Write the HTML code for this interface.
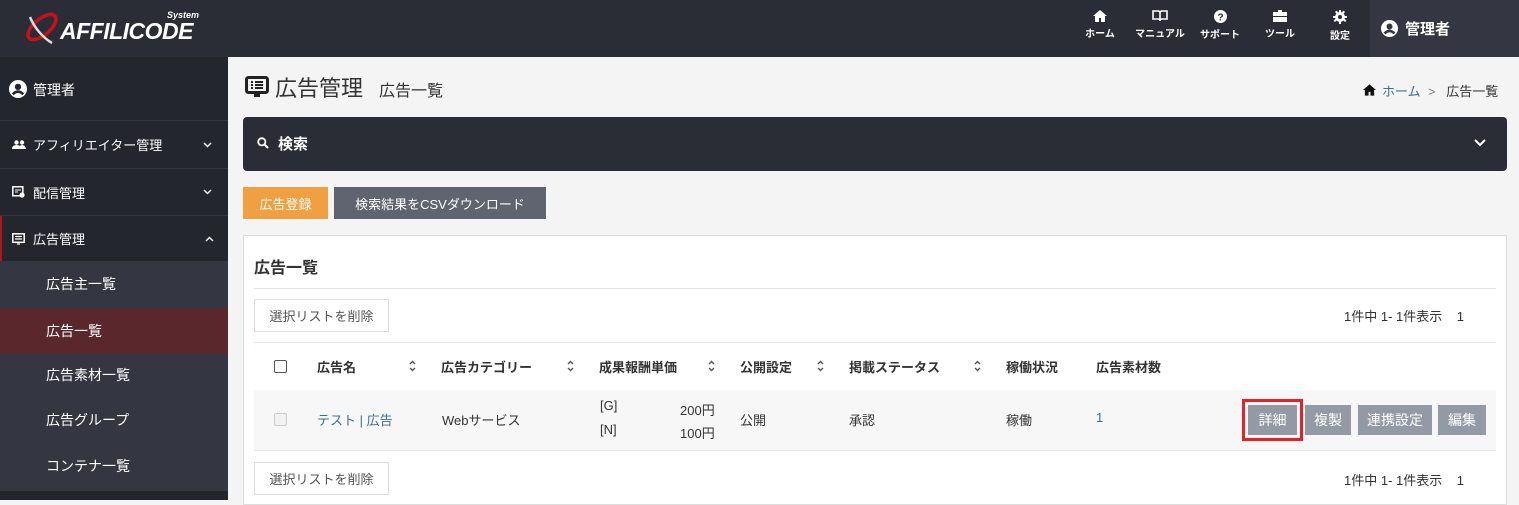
<!DOCTYPE html>
<html><head><meta charset="utf-8"><style>
*{box-sizing:border-box;margin:0;padding:0}
body{width:1519px;height:500px;overflow:hidden;background:#f4f4f4;font-family:"Liberation Sans","Noto Sans CJK JP",sans-serif;font-size:14px;color:#333;position:relative}
.abs{position:absolute}
.hdr{left:0;top:0;width:1519px;height:57px;background:#2a2d36}
.nav{top:10px;width:60px;text-align:center;color:#fff;font-size:10px;font-weight:bold}
.nav svg{display:block;margin:0 auto 3px}
.side{left:0;top:57px;width:228px;height:443px;background:#23262d}
.si{left:0;width:228px;color:#fff;font-size:13px;display:flex;align-items:center}
.sub{left:0;width:228px;height:46px;color:#fff;font-size:14px;padding-left:46px;line-height:46px}
.btn{color:#fff;font-size:13px;display:flex;align-items:center;justify-content:center}
.th{top:357px;font-weight:bold;font-size:13px;color:#333}
.sort{top:360px}
.td{font-size:13px;color:#333}
.ab{top:405px;height:30px;background:#939aa6;color:#fff;font-size:14px;display:flex;align-items:center;justify-content:center}
.chev{position:absolute;left:203px}
</style></head><body>
<div class="abs hdr"></div>
<svg class="abs" style="left:22px;top:9px" width="40" height="36" viewBox="0 0 40 36"><ellipse cx="20" cy="18" rx="17" ry="8" transform="rotate(-40 20 18)" fill="none" stroke="#c8101a" stroke-width="3.5"/><path d="M8 8 C12 18 20 28 30 34" stroke="#ddd" stroke-width="2.5" fill="none"/></svg>
<div class="abs" style="left:60px;top:18px;color:#fff;font-size:23px;font-weight:bold;font-style:italic;letter-spacing:-0.5px">AFFILICODE</div>
<div class="abs" style="left:167px;top:10px;color:#fff;font-size:9px;font-weight:bold;font-style:italic">System</div>
<div class="abs nav" style="left:1070px"><svg width="14" height="12" viewBox="0 0 14 12"><path d="M7 0L0 6h2v6h4V8h2v4h4V6h2z" fill="#fff"/></svg>ホーム</div>
<div class="abs nav" style="left:1130px"><svg width="16" height="12" viewBox="0 0 16 12"><path d="M1 1h5q2 0 2 2v8q0-2-2-2H1zM15 1h-5q-2 0-2 2v8q0-2 2-2h5z" stroke="#fff" stroke-width="1.6" fill="none"/></svg>マニュアル</div>
<div class="abs nav" style="left:1190px"><svg width="13" height="13" viewBox="0 0 13 13"><circle cx="6.5" cy="6.5" r="6.5" fill="#fff"/><text x="6.5" y="10.5" font-size="10" font-weight="bold" text-anchor="middle" fill="#2a2d36" font-family="Liberation Sans">?</text></svg>サポート</div>
<div class="abs nav" style="left:1250px"><svg width="14" height="12" viewBox="0 0 14 12"><path d="M5 0h4v2h5v4H0V2h5zM0 7h14v5H0z" fill="#fff"/></svg>ツール</div>
<div class="abs nav" style="left:1310px"><svg width="14" height="14" viewBox="0 0 14 14"><circle cx="7" cy="7" r="5" fill="#fff"/><path d="M6 0h2v14H6zM0 6h14v2H0zM2 2l1.4-1.4 10 10L12 12zM12 2l-1.4-1.4-10 10L2 12z" fill="#fff"/><circle cx="7" cy="7" r="2" fill="#2a2d36"/></svg>設定</div>
<div class="abs" style="left:1370px;top:0;width:149px;height:57px;background:#343741"></div>
<svg class="abs" style="left:1381px;top:20px" width="17" height="17" viewBox="0 0 17 17"><circle cx="8.5" cy="8.5" r="8.5" fill="#fff"/><circle cx="8.5" cy="6.5" r="3" fill="#343741"/><path d="M3.5 13.5q5-5 10 0" stroke="#343741" stroke-width="2.5" fill="none"/></svg>
<div class="abs" style="left:1405px;top:18px;color:#fff;font-size:15px;font-weight:bold">管理者</div>

<div class="abs side"></div>
<svg class="abs" style="left:9px;top:80px" width="18" height="18" viewBox="0 0 17 17"><circle cx="8.5" cy="8.5" r="8.5" fill="#fff"/><circle cx="8.5" cy="6.5" r="3" fill="#23262d"/><path d="M3.5 13.5q5-5 10 0" stroke="#23262d" stroke-width="2.5" fill="none"/></svg>
<div class="abs" style="left:33px;top:80px;color:#fff;font-size:14px">管理者</div>
<div class="abs" style="left:0;top:120px;width:228px;height:1px;background:#33363e"></div>
<div class="abs si" style="top:121px;height:47px;padding-left:12px"><svg width="14" height="9" style="margin-right:7px" viewBox="0 0 14 9"><circle cx="4.5" cy="2.5" r="2.2" fill="#fff"/><circle cx="10" cy="2.5" r="2.2" fill="#fff"/><path d="M0 9q0-4 4.5-4t4.5 4zM7 9q0-4 3-4t4 4z" fill="#fff"/></svg>アフィリエイター管理<svg class="chev" width="9" height="6" viewBox="0 0 9 6"><path d="M1 1l3.5 3.5L8 1" stroke="#fff" stroke-width="1.5" fill="none"/></svg></div>
<div class="abs" style="left:0;top:168px;width:228px;height:1px;background:#33363e"></div>
<div class="abs si" style="top:169px;height:46px;padding-left:12px"><svg width="13" height="12" style="margin-right:8px" viewBox="0 0 13 12"><rect x="0.8" y="0.8" width="10" height="9" fill="none" stroke="#fff" stroke-width="1.5"/><path d="M3 4h6M3 6h3" stroke="#fff"/><circle cx="10" cy="9" r="2.6" fill="#fff"/></svg>配信管理<svg class="chev" width="9" height="6" viewBox="0 0 9 6"><path d="M1 1l3.5 3.5L8 1" stroke="#fff" stroke-width="1.5" fill="none"/></svg></div>
<div class="abs" style="left:0;top:215px;width:228px;height:1px;background:#33363e"></div>
<div class="abs si" style="top:216px;height:45px;padding-left:10px;border-left:2px solid #b0141e"><svg width="13" height="12" style="margin-right:8px" viewBox="0 0 13 12"><rect x="0.8" y="0.8" width="11.4" height="8.5" fill="none" stroke="#fff" stroke-width="1.5"/><path d="M3 3.5h7M3 6h7M5 11h3" stroke="#fff" stroke-width="1.3"/></svg>広告管理<svg class="chev" width="9" height="6" viewBox="0 0 9 6"><path d="M1 5l3.5-3.5L8 5" stroke="#fff" stroke-width="1.5" fill="none"/></svg></div>
<div class="abs" style="left:0;top:261px;width:228px;height:230px;background:#343741"></div>
<div class="abs sub" style="top:261px">広告主一覧</div>
<div class="abs sub" style="top:308px;background:#5a272d">広告一覧</div>
<div class="abs sub" style="top:352px">広告素材一覧</div>
<div class="abs sub" style="top:397px">広告グループ</div>
<div class="abs sub" style="top:443px">コンテナ一覧</div>

<svg class="abs" style="left:245px;top:76px" width="24" height="21" viewBox="0 0 24 21"><rect x="1.5" y="1.5" width="21" height="15" rx="2" fill="none" stroke="#222" stroke-width="3"/><path d="M6 6h2M10 6h8M6 9h2M10 9h8M6 12h2M10 12h8" stroke="#222" stroke-width="2"/><path d="M9 18h6v3H9z" fill="#222"/></svg>
<div class="abs" style="left:275px;top:71px;font-size:22px;color:#333">広告管理</div>
<div class="abs" style="left:379px;top:77px;font-size:16px;color:#333">広告一覧</div>
<svg class="abs" style="left:1363px;top:84px" width="13" height="12" viewBox="0 0 14 12"><path d="M7 0L0 6h2v6h4V8h2v4h4V6h2z" fill="#111"/></svg>
<div class="abs" style="left:1382px;top:81px;font-size:13px;color:#3a6f9e">ホーム <span style="color:#888">&nbsp;&gt;&nbsp;</span> <span style="color:#333">&nbsp;広告一覧</span></div>

<div class="abs" style="left:243px;top:117px;width:1264px;height:54px;background:#2a2d36;border-radius:4px"></div>
<svg class="abs" style="left:257px;top:137px" width="12" height="12" viewBox="0 0 12 12"><circle cx="4.8" cy="4.8" r="3.6" fill="none" stroke="#fff" stroke-width="1.8"/><path d="M7.5 7.5L11 11" stroke="#fff" stroke-width="2"/></svg>
<div class="abs" style="left:278px;top:133px;color:#fff;font-size:15px;font-weight:bold">検索</div>
<svg class="abs" style="left:1474px;top:139px" width="12" height="8" viewBox="0 0 12 8"><path d="M1 1l5 5 5-5" stroke="#fff" stroke-width="2" fill="none"/></svg>

<div class="abs btn" style="left:243px;top:187px;width:85px;height:32px;background:#f0a040">広告登録</div>
<div class="abs btn" style="left:334px;top:187px;width:212px;height:32px;background:#5f6470">検索結果をCSVダウンロード</div>

<div class="abs" style="left:243px;top:235px;width:1264px;height:270px;background:#fff;border:1px solid #ddd"></div>
<div class="abs" style="left:254px;top:254px;font-size:16px;font-weight:bold;color:#333">広告一覧</div>
<div class="abs" style="left:254px;top:288px;width:1242px;height:1px;background:#e6e6e6"></div>
<div class="abs" style="left:254px;top:299px;width:135px;height:33px;border:1px solid #ddd;font-size:13px;color:#555;display:flex;align-items:center;justify-content:center">選択リストを削除</div>
<div class="abs" style="left:1344px;top:306px;font-size:13px;color:#333">1件中 1- 1件表示 &nbsp;&nbsp;&nbsp;1</div>
<div class="abs" style="left:254px;top:342px;width:1242px;height:1px;background:#e6e6e6"></div>
<div class="abs" style="left:274px;top:360px;width:13px;height:13px;border:1px solid #555;border-radius:2px;background:#fff"></div>
<div class="abs th" style="left:317px">広告名</div>
<div class="abs th" style="left:441px">広告カテゴリー</div>
<div class="abs th" style="left:599px">成果報酬単価</div>
<div class="abs th" style="left:740px">公開設定</div>
<div class="abs th" style="left:849px">掲載ステータス</div>
<div class="abs th" style="left:1006px">稼働状況</div>
<div class="abs th" style="left:1096px">広告素材数</div>
<svg class="abs sort" style="left:409px" width="7" height="12" viewBox="0 0 7 12"><path d="M1 4l2.5-2.5L6 4M1 8l2.5 2.5L6 8" stroke="#555" stroke-width="1.4" fill="none"/></svg>
<svg class="abs sort" style="left:567px" width="7" height="12" viewBox="0 0 7 12"><path d="M1 4l2.5-2.5L6 4M1 8l2.5 2.5L6 8" stroke="#555" stroke-width="1.4" fill="none"/></svg>
<svg class="abs sort" style="left:708px" width="7" height="12" viewBox="0 0 7 12"><path d="M1 4l2.5-2.5L6 4M1 8l2.5 2.5L6 8" stroke="#555" stroke-width="1.4" fill="none"/></svg>
<svg class="abs sort" style="left:817px" width="7" height="12" viewBox="0 0 7 12"><path d="M1 4l2.5-2.5L6 4M1 8l2.5 2.5L6 8" stroke="#555" stroke-width="1.4" fill="none"/></svg>
<svg class="abs sort" style="left:974px" width="7" height="12" viewBox="0 0 7 12"><path d="M1 4l2.5-2.5L6 4M1 8l2.5 2.5L6 8" stroke="#555" stroke-width="1.4" fill="none"/></svg>
<div class="abs" style="left:254px;top:390px;width:1242px;height:61px;background:#f7f7f7;border-bottom:1px solid #e6e6e6"></div>
<div class="abs" style="left:274px;top:413px;width:13px;height:13px;border:1px solid #ccc;border-radius:2px;background:#f2f2f2"></div>
<div class="abs td" style="left:317px;top:410px;color:#3a6f9e">テスト | 広告</div>
<div class="abs td" style="left:442px;top:410px">Webサービス</div>
<div class="abs td" style="left:600px;top:398px">[G]</div><div class="abs td" style="left:680px;top:400px">200円</div>
<div class="abs td" style="left:600px;top:422px">[N]</div><div class="abs td" style="left:680px;top:423px">100円</div>
<div class="abs td" style="left:740px;top:410px">公開</div>
<div class="abs td" style="left:849px;top:410px">承認</div>
<div class="abs td" style="left:1006px;top:410px">稼働</div>
<div class="abs td" style="left:1096px;top:410px;color:#3a6f9e">1</div>
<div class="abs" style="left:1242px;top:399px;width:61px;height:42px;border:3px solid #e8202a"></div>
<div class="abs ab" style="left:1248px;width:49px">詳細</div>
<div class="abs ab" style="left:1305px;width:46px">複製</div>
<div class="abs ab" style="left:1358px;width:74px">連携設定</div>
<div class="abs ab" style="left:1438px;width:48px">編集</div>
<div class="abs" style="left:254px;top:462px;width:135px;height:33px;border:1px solid #ddd;font-size:13px;color:#555;display:flex;align-items:center;justify-content:center">選択リストを削除</div>
<div class="abs" style="left:1344px;top:470px;font-size:13px;color:#333">1件中 1- 1件表示 &nbsp;&nbsp;&nbsp;1</div>
</body></html>
